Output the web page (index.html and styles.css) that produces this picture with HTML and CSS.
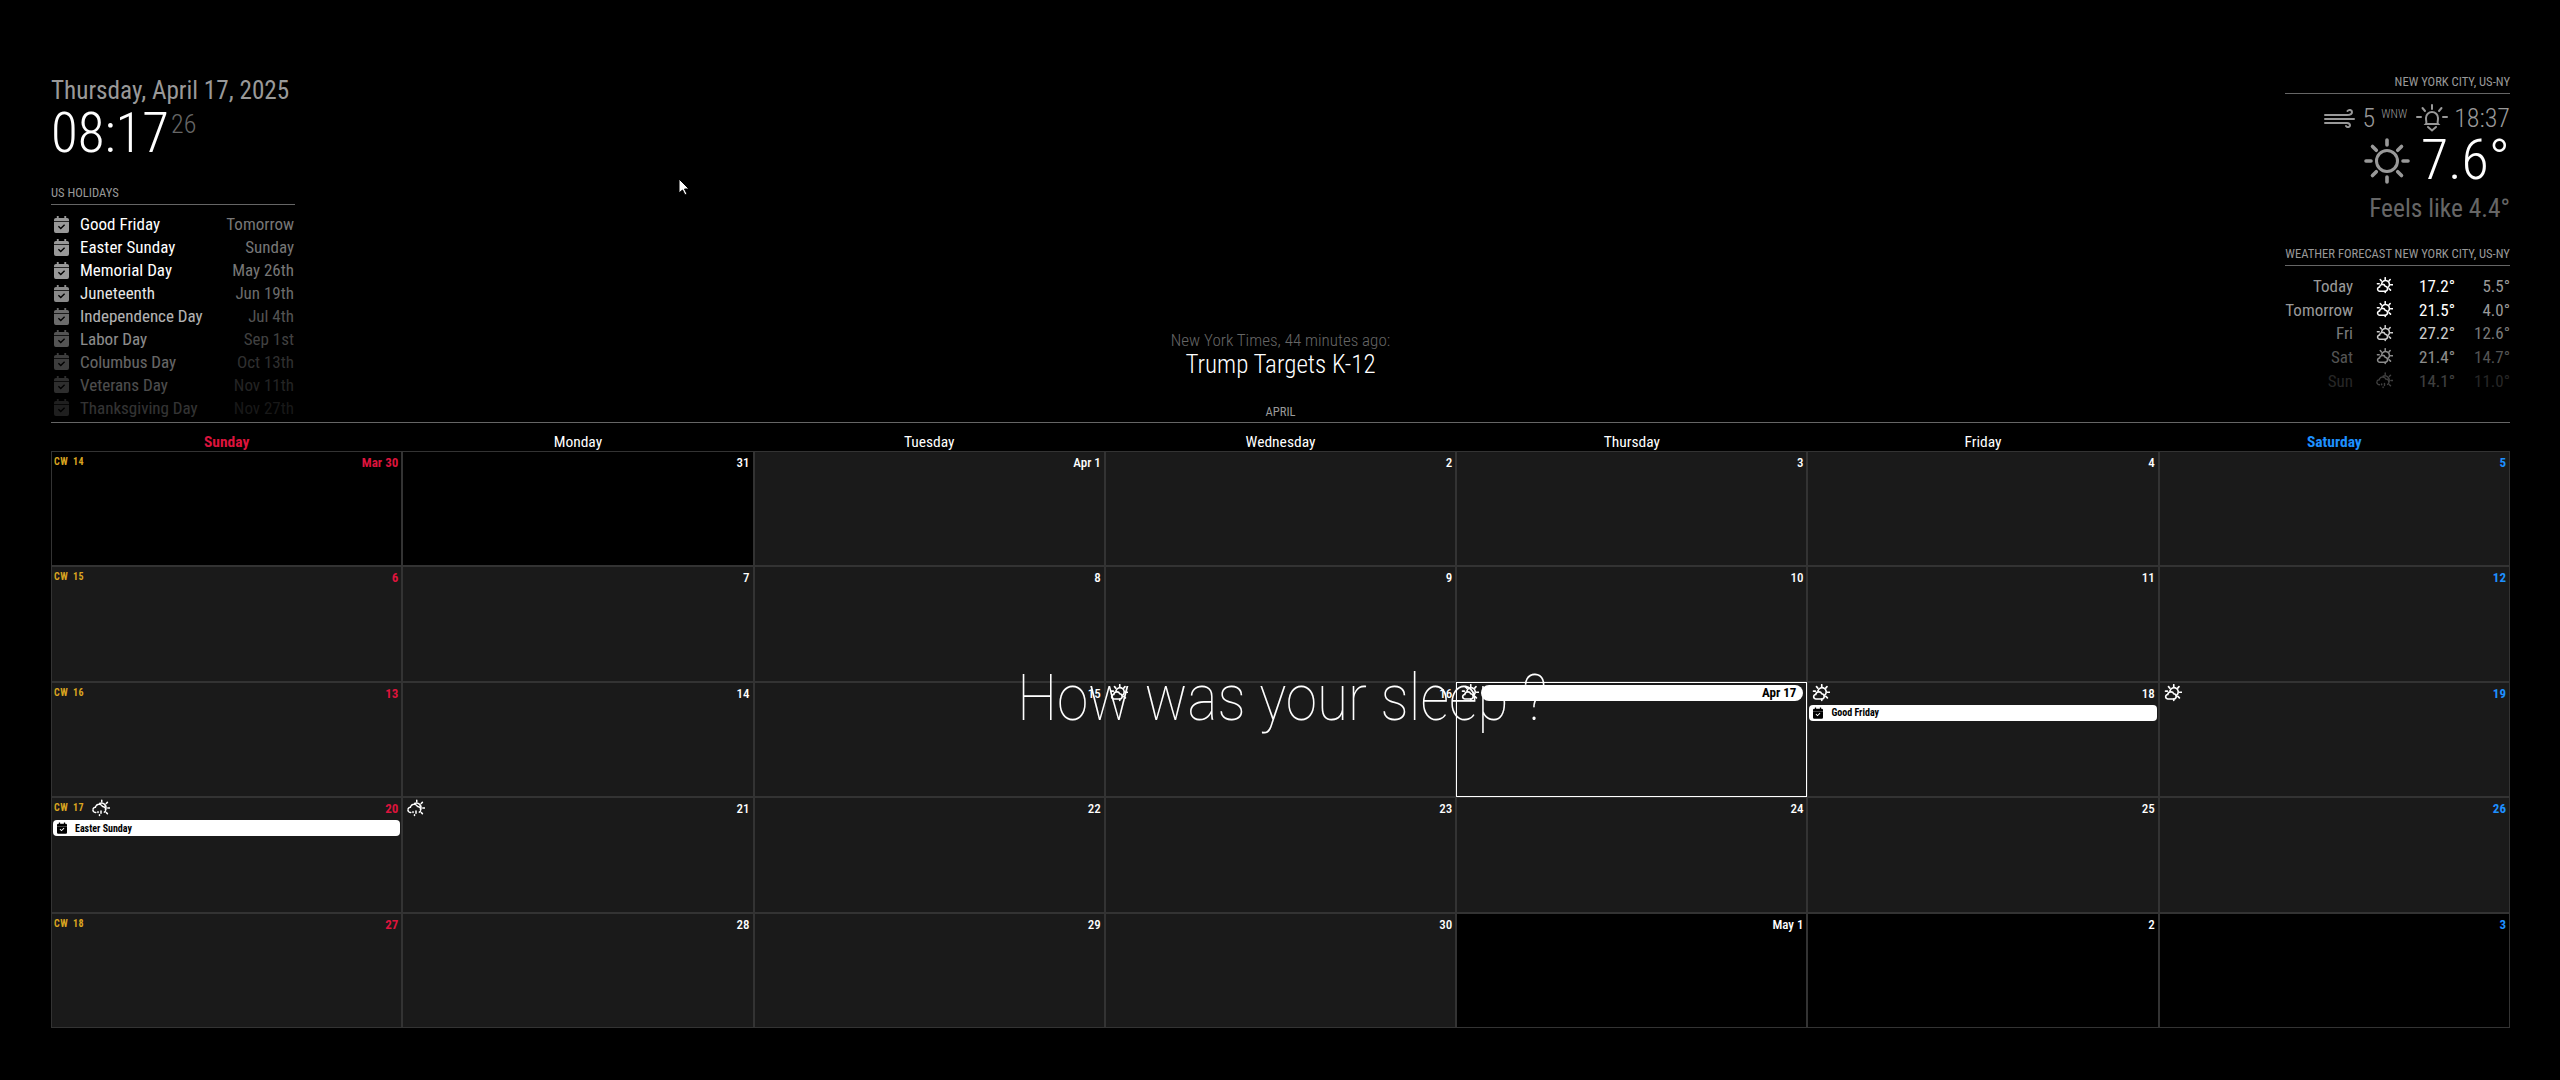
FILE: index.html
```html
<!DOCTYPE html>
<html lang="en">
<head>
<meta charset="utf-8">
<title>MagicMirror</title>
<link rel="stylesheet" href="styles.css">
</head>
<body>
<svg class="defs" width="0" height="0" aria-hidden="true">
  <symbol id="cal" viewBox="0 0 16 18"><path fill="currentColor" fill-rule="evenodd" d="M3 0h2v2h6V0h2v2h1a2 2 0 0 1 2 2v12a2 2 0 0 1-2 2H2a2 2 0 0 1-2-2V4a2 2 0 0 1 2-2h1zM0 5.6h16v.7H0zM4.2 11.3l1-1 2 2 3.600-3.600 1 1-4.600 4.600z"/></symbol>
  <symbol id="cloudsun" viewBox="0 0 24 24"><g fill="none" stroke="currentColor" stroke-width="2.200" stroke-linecap="round"><path d="M13 1v2.500M6 3.500l1.700 2M20 3.500l-1.700 2M20.500 11h3M2 9.500h2.500M18.500 16.500l2 2M13 20v2"/><path d="M8 9a5.600 5.600 0 1 1 9 5.800"/><path d="M5.500 20a3 3 0 0 1-.5-6 4.200 4.200 0 0 1 8-1 3.600 3.600 0 0 1 .8 7z"/></g></symbol>
  <symbol id="raincloud" viewBox="0 0 24 24"><g fill="none" stroke="currentColor" stroke-width="2" stroke-linecap="round"><path d="M13 1.500v2M20.500 4.500l-1.500 1.500M21 12h2.500M19 18l1.500 1.500"/><path d="M10 6a6 6 0 0 1 8 8"/><path d="M5 18a3.500 3.500 0 0 1-.5-7 5 5 0 0 1 9.500-.8 4 4 0 0 1 1.500 7.800" stroke-dasharray="2 1.500"/><path d="M8 17v1M12 16v3M10 21v1"/></g></symbol>
  <symbol id="sun" viewBox="0 0 46 46"><g fill="none" stroke="currentColor" stroke-linecap="round"><circle cx="23" cy="23" r="10.500" stroke-width="3"/><path stroke-width="3.600" d="M23 2v5M23 39v5M2 23h5M39 23h5M8.500 8.500l3.800 3.800M33.700 33.700l3.800 3.800M37.500 8.500l-3.800 3.800M12.300 33.700l-3.800 3.800"/></g></symbol>
  <symbol id="wind" viewBox="0 0 32 20"><g fill="none" stroke="currentColor" stroke-width="2" stroke-linecap="round"><path d="M1 7h22c3 0 5-1 5-3s-3-3-4.500-1M1 11h29M1 15h22c2 0 3 1 3 2.500S23.500 20 22 18"/></g></symbol>
  <symbol id="sunset" viewBox="0 0 32 28"><g fill="none" stroke="currentColor" stroke-width="2" stroke-linecap="round"><path d="M16 1v4M6.500 4l2.500 3M25.500 4L23 7M1 13h4M27 13h4"/><path d="M10 20c1-1 0-2 0-6a6 6 0 0 1 12 0c0 4-1 5 0 6z"/><path d="M12 23l4 3.500 4-3.500"/></g></symbol>
</svg>

<div class="page">
  <header class="top">
    <section class="col-left">
      <div class="date">Thursday, April 17, 2025</div>
      <div class="time"><span>08:17</span><sup class="secs">26</sup></div>
      <h2 class="mod-title holidays-title">US HOLIDAYS</h2>
      <ul class="holidays">
        <li class="f100"><svg class="cal-ico"><use href="#cal"/></svg><span class="h-name">Good Friday</span><span class="h-when">Tomorrow</span></li>
        <li class="f100"><svg class="cal-ico"><use href="#cal"/></svg><span class="h-name">Easter Sunday</span><span class="h-when">Sunday</span></li>
        <li class="f100"><svg class="cal-ico"><use href="#cal"/></svg><span class="h-name">Memorial Day</span><span class="h-when">May 26th</span></li>
        <li class="f90"><svg class="cal-ico"><use href="#cal"/></svg><span class="h-name">Juneteenth</span><span class="h-when">Jun 19th</span></li>
        <li class="f70"><svg class="cal-ico"><use href="#cal"/></svg><span class="h-name">Independence Day</span><span class="h-when">Jul 4th</span></li>
        <li class="f55"><svg class="cal-ico"><use href="#cal"/></svg><span class="h-name">Labor Day</span><span class="h-when">Sep 1st</span></li>
        <li class="f40"><svg class="cal-ico"><use href="#cal"/></svg><span class="h-name">Columbus Day</span><span class="h-when">Oct 13th</span></li>
        <li class="f30"><svg class="cal-ico"><use href="#cal"/></svg><span class="h-name">Veterans Day</span><span class="h-when">Nov 11th</span></li>
        <li class="f20"><svg class="cal-ico"><use href="#cal"/></svg><span class="h-name">Thanksgiving Day</span><span class="h-when">Nov 27th</span></li>
      </ul>
    </section>

    <section class="col-center">
      <div class="news-source">New York Times, 44 minutes ago:</div>
      <div class="news-title">Trump Targets K-12</div>
    </section>

    <section class="col-right">
      <div class="right-inner">
        <h2 class="mod-title right-title">NEW YORK CITY, US-NY</h2>
        <div class="wx-meta"><svg class="wind-ico"><use href="#wind"/></svg><span>5</span><sup class="wdir">WNW</sup><svg class="sunset-ico"><use href="#sunset"/></svg><span>18:37</span></div>
        <div class="wx-now"><svg class="sun-ico"><use href="#sun"/></svg><span>7.6°</span></div>
        <div class="wx-feels">Feels like 4.4°</div>
        <h2 class="mod-title right-title forecast-title">WEATHER FORECAST NEW YORK CITY, US-NY</h2>
        <div class="fc-row f100"><span class="fc-day">Today</span><svg class="fc-ico"><use href="#cloudsun"/></svg><span class="fc-max">17.2°</span><span class="fc-min">5.5°</span></div>
        <div class="fc-row f100"><span class="fc-day">Tomorrow</span><svg class="fc-ico"><use href="#cloudsun"/></svg><span class="fc-max">21.5°</span><span class="fc-min">4.0°</span></div>
        <div class="fc-row f80"><span class="fc-day">Fri</span><svg class="fc-ico"><use href="#cloudsun"/></svg><span class="fc-max">27.2°</span><span class="fc-min">12.6°</span></div>
        <div class="fc-row f55"><span class="fc-day">Sat</span><svg class="fc-ico"><use href="#cloudsun"/></svg><span class="fc-max">21.4°</span><span class="fc-min">14.7°</span></div>
        <div class="fc-row f25"><span class="fc-day">Sun</span><svg class="fc-ico"><use href="#raincloud"/></svg><span class="fc-max">14.1°</span><span class="fc-min">11.0°</span></div>
      </div>
    </section>
  </header>

  <main class="calendar">
    <h2 class="mod-title cal-title">APRIL</h2>
    <div class="weekdays">
      <div class="sun-c wd-bold">Sunday</div><div>Monday</div><div>Tuesday</div><div>Wednesday</div><div>Thursday</div><div>Friday</div><div class="sat-c wd-bold">Saturday</div>
    </div>
    <div class="grid">
      <div class="cell off"><div class="cell-head"><span class="cw">CW 14</span><span class="day sun-c">Mar 30</span></div></div>
      <div class="cell off"><div class="cell-head"><span class="day">31</span></div></div>
      <div class="cell"><div class="cell-head"><span class="day">Apr 1</span></div></div>
      <div class="cell"><div class="cell-head"><span class="day">2</span></div></div>
      <div class="cell"><div class="cell-head"><span class="day">3</span></div></div>
      <div class="cell"><div class="cell-head"><span class="day">4</span></div></div>
      <div class="cell"><div class="cell-head"><span class="day sat-c">5</span></div></div>

      <div class="cell"><div class="cell-head"><span class="cw">CW 15</span><span class="day sun-c">6</span></div></div>
      <div class="cell"><div class="cell-head"><span class="day">7</span></div></div>
      <div class="cell"><div class="cell-head"><span class="day">8</span></div></div>
      <div class="cell"><div class="cell-head"><span class="day">9</span></div></div>
      <div class="cell"><div class="cell-head"><span class="day">10</span></div></div>
      <div class="cell"><div class="cell-head"><span class="day">11</span></div></div>
      <div class="cell"><div class="cell-head"><span class="day sat-c">12</span></div></div>

      <div class="cell"><div class="cell-head"><span class="cw">CW 16</span><span class="day sun-c">13</span></div></div>
      <div class="cell"><div class="cell-head"><span class="day">14</span></div></div>
      <div class="cell"><div class="cell-head"><span class="day">15</span></div></div>
      <div class="cell"><div class="cell-head"><svg class="cell-ico"><use href="#cloudsun"/></svg><span class="day">16</span></div></div>
      <div class="cell today"><div class="cell-head"><svg class="cell-ico"><use href="#cloudsun"/></svg><span class="day today-pill">Apr 17</span></div></div>
      <div class="cell"><div class="cell-head"><svg class="cell-ico"><use href="#cloudsun"/></svg><span class="day">18</span></div><div class="event"><svg class="ev-ico"><use href="#cal"/></svg>Good Friday</div></div>
      <div class="cell"><div class="cell-head"><svg class="cell-ico"><use href="#cloudsun"/></svg><span class="day sat-c">19</span></div></div>

      <div class="cell"><div class="cell-head"><span class="cw">CW 17</span><svg class="cell-ico"><use href="#raincloud"/></svg><span class="day sun-c">20</span></div><div class="event"><svg class="ev-ico"><use href="#cal"/></svg>Easter Sunday</div></div>
      <div class="cell"><div class="cell-head"><svg class="cell-ico"><use href="#raincloud"/></svg><span class="day">21</span></div></div>
      <div class="cell"><div class="cell-head"><span class="day">22</span></div></div>
      <div class="cell"><div class="cell-head"><span class="day">23</span></div></div>
      <div class="cell"><div class="cell-head"><span class="day">24</span></div></div>
      <div class="cell"><div class="cell-head"><span class="day">25</span></div></div>
      <div class="cell"><div class="cell-head"><span class="day sat-c">26</span></div></div>

      <div class="cell"><div class="cell-head"><span class="cw">CW 18</span><span class="day sun-c">27</span></div></div>
      <div class="cell"><div class="cell-head"><span class="day">28</span></div></div>
      <div class="cell"><div class="cell-head"><span class="day">29</span></div></div>
      <div class="cell"><div class="cell-head"><span class="day">30</span></div></div>
      <div class="cell off"><div class="cell-head"><span class="day">May 1</span></div></div>
      <div class="cell off"><div class="cell-head"><span class="day">2</span></div></div>
      <div class="cell off"><div class="cell-head"><span class="day sat-c">3</span></div></div>
    </div>
  </main>
</div>

<div class="sleep">How was your sleep ?</div>
<svg class="cursor" viewBox="0 0 12 18"><path d="M1 1v14l3.500-3 2.500 5 2-1-2.500-5H11z" fill="#fff" stroke="#000" stroke-width="1"/></svg>
</body>
</html>
```
FILE: styles.css
```css
* { box-sizing: border-box; }
html, body { margin: 0; padding: 0; background: #000; }
body {
  width: 2560px;
  height: 1080px;
  overflow: hidden;
  position: relative;
  color: #fff;
  font-family: "Roboto Condensed", Roboto, sans-serif;
  font-stretch: 75%;
}
.defs { position: absolute; }
.page { padding: 0 50px 0 51px; }

.top {
  display: grid;
  grid-template-columns: 1fr auto 1fr;
  height: 405px;
}
.mod-title {
  margin: 0;
  font-size: 12.600px;
  line-height: 14px;
  font-weight: 400;
  color: #999;
  padding-bottom: 4px;
  border-bottom: 1px solid #666;
  white-space: nowrap;
}
.right-title { text-align: right; }

/* left column */
.col-left { width: 244px; padding-top: 75px; }
.date { font-size: 25.200px; line-height: 31px; color: #999; white-space: nowrap; }
.time { font-size: 55px; line-height: 55px; font-weight: 300; white-space: nowrap; }
.secs { font-size: 26px; line-height: 26px; color: #666; vertical-align: 19px; margin-left: 2px; }
.holidays-title { margin-top: 25px; }
.holidays { list-style: none; margin: 8px 0 0; padding: 0; }
.holidays li { display: flex; align-items: center; height: 22.900px; font-size: 17px; white-space: nowrap; }
.cal-ico { width: 15px; height: 17px; margin: 0 11px 0 3px; color: #999; flex: none; }
.h-name { flex: 1; }
.h-when { color: #777; font-weight: 400; padding-right: 1px; }

.f100 { opacity: 1; }
.f90 { opacity: .9; }
.f80 { opacity: .8; }
.f70 { opacity: .7; }
.f55 { opacity: .55; }
.f40 { opacity: .4; }
.f30 { opacity: .3; }
.f25 { opacity: .25; }
.f20 { opacity: .2; }

/* center */
.col-center { padding-top: 330px; text-align: center; white-space: nowrap; }
.news-source { font-size: 17px; line-height: 20px; font-weight: 300; color: #666; }
.news-title { font-size: 25px; line-height: 30px; font-weight: 300; }

/* right column */
.col-right { display: flex; justify-content: flex-end; }
.right-inner { width: 225px; padding-top: 75px; white-space: nowrap; }
.wx-meta { display: flex; justify-content: flex-end; align-items: center; margin-top: 9px; height: 30px; font-size: 26px; line-height: 30px; font-weight: 300; color: #999; }
.wind-ico { width: 32px; height: 20px; margin-right: 7px; }
.wdir { font-size: 12px; line-height: 14px; margin: 0 9px 0 6px; align-self: flex-start; padding-top: 4px; }
.sunset-ico { width: 32px; height: 28px; margin-right: 6px; }
.wx-now { display: flex; justify-content: flex-end; align-items: center; height: 55px; font-size: 56px; line-height: 55px; font-weight: 300; }
.sun-ico { width: 46px; height: 46px; margin-right: 11px; color: #999; }
.wx-feels { margin-top: 5px; font-size: 25.400px; line-height: 30px; font-weight: 400; color: #666; text-align: right; }
.forecast-title { margin-top: 24px; margin-bottom: 8px; }
.fc-row { display: grid; grid-template-columns: 68px 62px 40px 55px; align-items: center; height: 23.700px; font-size: 17px; text-align: right; }
.fc-day, .fc-min { color: #999; }
.fc-ico { width: 17px; height: 17px; justify-self: center; }

/* calendar */
.cal-title { text-align: center; padding-bottom: 3px; }
.weekdays { display: grid; grid-template-columns: repeat(7, 1fr); height: 28px; padding-top: 10px; font-size: 15.500px; line-height: 18px; text-align: center; }
.wd-bold { font-weight: 700; }
.sun-c { color: #dc143c; }
.sat-c { color: #1e90ff; }
.grid { display: grid; grid-template-columns: repeat(7, 1fr); grid-template-rows: repeat(5, 115.400px); }
.cell { background: #1a1a1a; border: 1px solid #333; padding: 1px 1px 0; min-width: 0; }
.cell.off { background: #000; }
.cell.today { border: 1px solid #fff; }
.cell-head { display: flex; align-items: center; height: 18px; padding: 1px 2px 0 1px; }
.cw { font-size: 10px; font-weight: 700; color: #daa520; letter-spacing: .5px; word-spacing: 2px; margin-right: 6px; align-self: flex-start; padding-top: 2px; }
.day { margin-left: auto; font-size: 13px; font-weight: 500; color: #fff; }
.day.sun-c { color: #dc143c; font-weight: 700; }
.day.sat-c { color: #1e90ff; font-weight: 700; }
.cell-ico { width: 18px; height: 18px; flex: none; margin-left: 2px; margin-top: -1px; }
.today-pill { flex: 1; margin-left: 2px; height: 16px; line-height: 16px; background: #fff; color: #000; font-weight: 700; border-radius: 8px; text-align: right; padding-right: 7px; }
.event { display: flex; align-items: center; height: 16px; margin-top: 3px; background: #fff; color: #000; border-radius: 4px; font-size: 10px; font-weight: 700; padding-left: 4px; white-space: nowrap; }
.ev-ico { width: 10px; height: 12px; margin-right: 8px; flex: none; }

/* overlays */
.sleep { position: absolute; left: 4px; right: 0; top: 656px; text-align: center; font-family: Roboto, sans-serif; font-stretch: 100%; font-size: 65px; line-height: 84px; font-weight: 100; white-space: nowrap; transform: scaleX(.872); }
.cursor { position: absolute; left: 678px; top: 178px; width: 12px; height: 18px; }
```
